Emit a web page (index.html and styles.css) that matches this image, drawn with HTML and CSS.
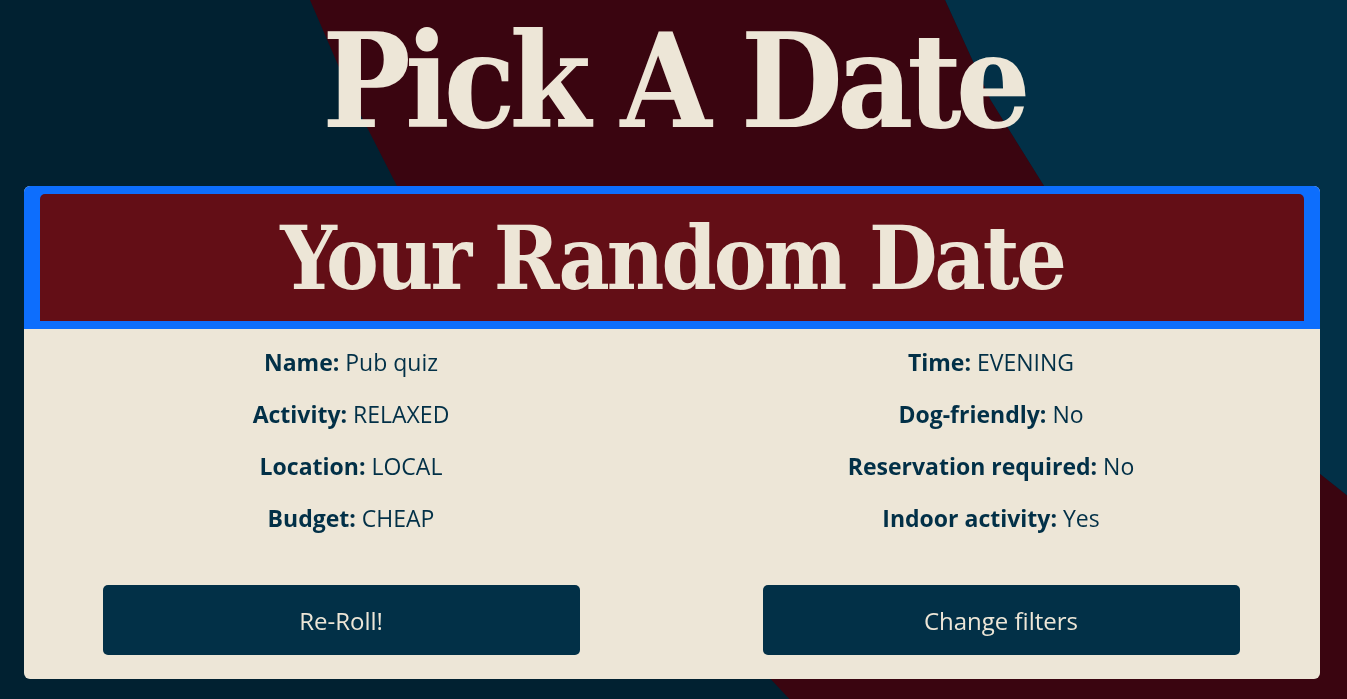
FILE: index.html
```html
<!DOCTYPE html>
<html lang="en">
<head>
<meta charset="utf-8">
<title>Pick A Date</title>
<link rel="stylesheet" href="styles.css">
</head>
<body>
<svg class="backdrop" viewBox="0 0 1347 699" preserveAspectRatio="none" aria-hidden="true">
  <path class="bg-right" d="M945,0 L1400,0 L1400,560 L1378,520 L1320,474 L1234.8,400 L1135.4,300 L1044,186 L990.5,100 Z"/>
  <path class="bg-band" d="M310,0 L945,0 L990.5,100 L1044,186 L1135.4,300 L1234.8,400 L1320,474 L1378,520 L1378,720 L810.3,720 L789.4,699 L696.3,600 L610.7,500 L533.5,400 L464.9,300 L397,186 L353.1,100 Z"/>
</svg>
<main class="page">
  <h1 class="title">Pick A Date</h1>
  <section class="card">
    <div class="card-header">
      <div class="header-inner">
        <h2 class="card-title">Your Random Date</h2>
      </div>
    </div>
    <div class="card-body">
      <div class="details">
        <div class="col">
          <p class="item"><b>Name:</b> Pub quiz</p>
          <p class="item"><b>Activity:</b> RELAXED</p>
          <p class="item"><b>Location:</b> LOCAL</p>
          <p class="item"><b>Budget:</b> CHEAP</p>
        </div>
        <div class="col">
          <p class="item"><b>Time:</b> EVENING</p>
          <p class="item"><b>Dog-friendly:</b> No</p>
          <p class="item"><b>Reservation required:</b> No</p>
          <p class="item"><b>Indoor activity:</b> Yes</p>
        </div>
      </div>
      <div class="actions">
        <button class="btn" type="button">Re-Roll!</button>
        <button class="btn" type="button">Change filters</button>
      </div>
    </div>
  </section>
</main>
</body>
</html>
```
FILE: styles.css
```css
html, body {
  margin: 0;
  padding: 0;
}
body {
  background: #012131;
  min-height: 100vh;
  overflow: hidden;
  font-family: "Open Sans", "Noto Sans", sans-serif;
  color: #023047;
}
.backdrop {
  position: fixed;
  left: 0;
  top: 0;
  width: 100vw;
  height: 100vh;
  z-index: 0;
  overflow: visible;
}
.bg-right { fill: #023047; }
.bg-band { fill: #3a0510; }
.page {
  position: relative;
  z-index: 1;
  display: flex;
  flex-direction: column;
}
.title {
  margin: 0 0 24px;
  font-family: "DejaVu Serif Condensed", "DejaVu Serif", "Liberation Serif", serif;
  font-stretch: condensed;
  font-weight: 700;
  font-size: 131px;
  line-height: 162px;
  text-align: center;
  color: #ede6d7;
  letter-spacing: -6px;
}
.card {
  margin: 0 27px 0 24px;
  background: #ede6d7;
  border-radius: 6px;
  overflow: hidden;
}
.card-header {
  background: #0d6efd;
  padding: 8px 16px;
}
.header-inner {
  background: #630e16;
  border-radius: 5px 5px 0 0;
  height: 127px;
  display: flex;
  align-items: center;
  justify-content: center;
}
.card-title {
  margin: 0;
  font-family: "DejaVu Serif Condensed", "DejaVu Serif", "Liberation Serif", serif;
  font-stretch: condensed;
  font-weight: 700;
  font-size: 88px;
  line-height: 1;
  color: #ede6d7;
  letter-spacing: -3px;
}
.card-body {
  padding: 18px 9px 24px 7px;
}
.details {
  display: grid;
  grid-template-columns: 1fr 1fr;
}
.col {
  display: flex;
  flex-direction: column;
  align-items: center;
  gap: 22px;
}
.item {
  margin: 0;
  font-size: 23px;
  line-height: 30px;
}
.item b {
  font-weight: 700;
}
.actions {
  display: flex;
  justify-content: center;
  gap: 183px;
  margin-top: 52px;
}
.btn {
  width: 477px;
  height: 70px;
  border: none;
  border-radius: 5px;
  background: #023047;
  color: #ede6d7;
  font-family: "Open Sans", "Noto Sans", sans-serif;
  font-size: 24px;
}
```
